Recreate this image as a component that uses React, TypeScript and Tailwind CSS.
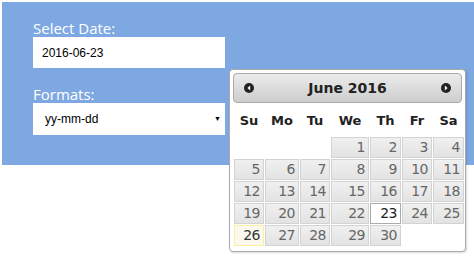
const weekDays = ["Su", "Mo", "Tu", "We", "Th", "Fr", "Sa"];

// null = empty slot before the 1st
const days: (number | null)[] = [null, null, null];
for (let d = 1; d <= 30; d++) days.push(d);

function DayCell({ day }: { day: number | null }) {
  if (day === null) return <div className="h-[21px]" />;
  let cls = "border-[#d3d3d3] bg-gradient-to-b from-[#f0f0f0] to-[#e3e3e3] text-[#666]";
  if (day === 23) cls = "border-[#aaa] bg-white text-[#212121]";
  if (day === 26) cls = "border-[#fcefa1] bg-[#fbf9ee] text-[#363636]";
  return (
    <div className={`h-[21px] border text-right pr-[3px] text-[14px] tracking-[-0.5px] leading-[19px] ${cls}`}>
      {day}
    </div>
  );
}

function NavIcon({ dir }: { dir: "prev" | "next" }) {
  return (
    <svg width="10" height="10" viewBox="0 0 10 10">
      <circle cx="5" cy="5" r="5" fill="#222" />
      {dir === "prev" ? (
        <path d="M6.2 2.6 L3.4 5 L6.2 7.4 Z" fill="#fff" />
      ) : (
        <path d="M3.8 2.6 L6.6 5 L3.8 7.4 Z" fill="#fff" />
      )}
    </svg>
  );
}

export default function App() {
  return (
    <div className="relative w-[474px] h-[257px] bg-white overflow-hidden">
      <div className="ml-[2px] mt-[2px] h-[163px] bg-[#7ea8e2] pl-[31px] pt-[17px]">
        <label className="block h-[18px] text-[15px] leading-[18px] text-white [font-family:'Open_Sans',sans-serif]">
          Select Date:
        </label>
        <div className="w-[192px] h-[31px] bg-white flex items-center pl-[9px] text-[12px] text-black [font-family:'Liberation_Sans',Arial,sans-serif]">
          2016-06-23
        </div>
        <label className="block mt-[17px] h-[18px] text-[15px] leading-[18px] text-white [font-family:'Open_Sans',sans-serif]">
          Formats:
        </label>
        <div className="w-[192px] h-[32px] bg-white flex items-center justify-between pl-[12px] pr-[4px] text-[12px] text-black [font-family:'Liberation_Sans',Arial,sans-serif]">
          <span>yy-mm-dd</span>
          <span className="text-[7px]">▼</span>
        </div>
      </div>

      {/* datepicker popup */}
      <div className="absolute left-[229px] top-[69px] w-[237px] h-[183px] bg-white border border-[#aaa] rounded-[4px] shadow-[1px_1px_2px_rgba(0,0,0,0.15)] p-[3px] [font-family:'DejaVu_Sans',Verdana,sans-serif]">
        <div className="h-[30px] flex items-center justify-between px-[10px] border border-[#aaa] rounded-[4px] bg-gradient-to-b from-[#ececec] to-[#cdcdcd]">
          <NavIcon dir="prev" />
          <span className="text-[14px] font-bold text-[#222]">June 2016</span>
          <NavIcon dir="next" />
        </div>

        <div className="mt-[2px] px-[1px] grid grid-cols-[30px_34px_30px_38px_31px_30px_31px] gap-x-[1px] gap-y-[1px]">
          {weekDays.map((w) => (
            <div key={w} className="h-[31px] flex items-center justify-center text-[13px] font-bold text-[#222]">
              {w}
            </div>
          ))}
          {days.map((d, i) => (
            <DayCell key={i} day={d} />
          ))}
        </div>
      </div>
    </div>
  );
}
